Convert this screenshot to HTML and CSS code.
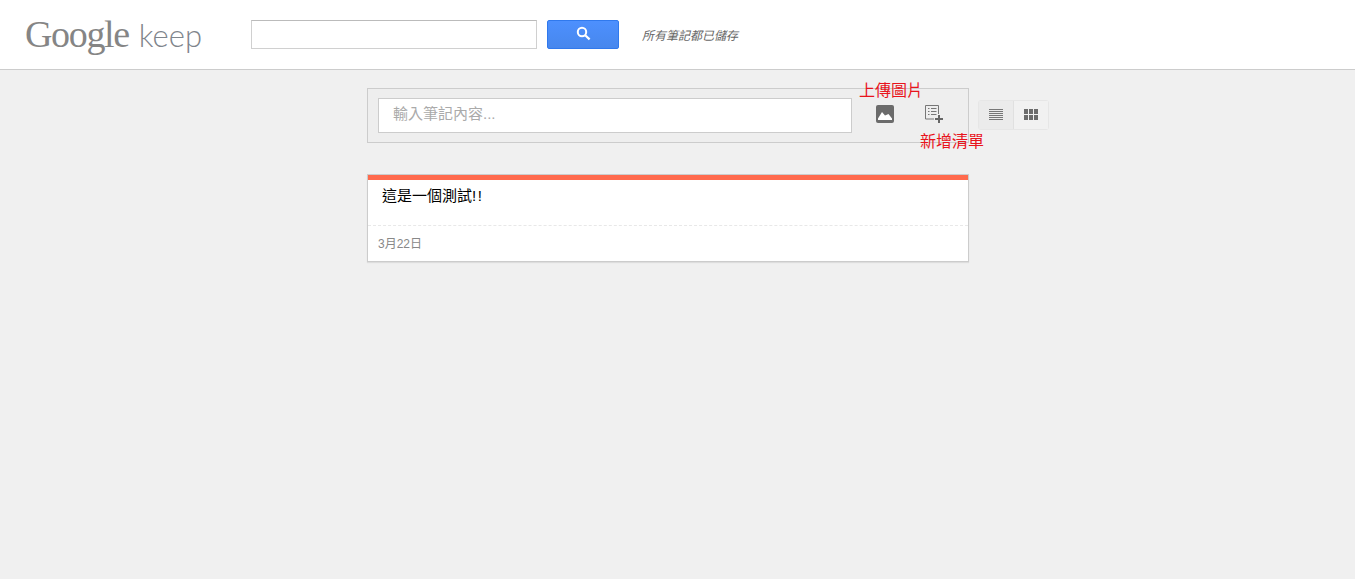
FILE: index.html
```html
<!DOCTYPE html>
<html lang="zh-Hant">
<head>
  <meta charset="UTF-8" />
  <title>Google Keep</title>
  <link rel="stylesheet" href="styles.css">
</head>
<body>
  <header class="topbar">
    <div class="logo"><span class="logo-google">Google</span><span class="logo-keep">keep</span></div>
    <input class="search-input" type="text" />
    <button class="search-btn" type="button" aria-label="search">
      <svg width="15" height="15" viewBox="0 0 15 15"><circle cx="6" cy="6" r="4.2" fill="none" stroke="#fff" stroke-width="2"/><path d="M9.2 9.2l4.4 4.2" stroke="#fff" stroke-width="2.2" fill="none"/></svg>
    </button>
    <span class="saved">所有筆記都已儲存</span>
  </header>

  <main class="main">
    <div class="column">
      <div class="composer">
        <div class="note-input">輸入筆記內容...</div>
        <button class="tool tool-image" type="button" aria-label="上傳圖片">
          <svg width="18" height="18" viewBox="0 0 18 18"><rect width="18" height="18" rx="2" fill="#6b6b6b"/><path d="M2 15v-1.500L6 7l3 3.500L12.500 9l3.500 4.500V15z" fill="#fff"/></svg>
        </button>
        <button class="tool tool-list" type="button" aria-label="新增清單">
          <svg width="19" height="19" viewBox="0 0 19 19">
            <path d="M13.500 9V.5H.5v13.500H9" fill="none" stroke="#777"/>
            <path d="M3 3.500h1.500M3 6.500h1.500M3 9.500h1.500M6 3.500h5.500M6 6.500h5.500M6 9.500h5.500" stroke="#777" fill="none"/>
            <path d="M14 10v8M10 14h8" stroke="#666" stroke-width="2" fill="none"/>
          </svg>
        </button>
        <span class="label label-image">上傳圖片</span>
        <span class="label label-list">新增清單</span>
      </div>

      <article class="note">
        <div class="note-bar"></div>
        <div class="note-body">這是一個測試<span class="bang">!!</span></div>
        <div class="note-foot">3月22日</div>
      </article>
    </div>

    <div class="view-toggle">
      <button class="view-btn active" type="button" aria-label="list">
        <svg width="14" height="11" viewBox="0 0 14 11"><path d="M0 .5h14M0 2.500h14M0 4.500h14M0 6.500h14M0 8.500h14M0 10.500h14" stroke="#777" fill="none"/></svg>
      </button>
      <button class="view-btn" type="button" aria-label="grid">
        <svg width="14" height="11" viewBox="0 0 14 11" fill="#6b6b6b"><rect width="4" height="5"/><rect x="5" width="4" height="5"/><rect x="10" width="4" height="5"/><rect y="6" width="4" height="5"/><rect x="5" y="6" width="4" height="5"/><rect x="10" y="6" width="4" height="5"/></svg>
      </button>
    </div>
  </main>
</body>
</html>
```

FILE: styles.css
```css
* { box-sizing: border-box; }

body {
  margin: 0;
  height: 100vh;
  overflow: hidden;
  background-color: #f0f0f0;
  font-family: "Liberation Sans", Arial, "Noto Sans CJK TC", sans-serif;
}

.topbar {
  display: flex;
  align-items: center;
  height: 70px;
  padding: 0 0 0 25px;
  background-color: #fff;
  border-bottom: 1px solid #ccc;
}

.logo {
  display: flex;
  align-items: baseline;
  width: 226px;
  color: #858585;
  margin-top: -2px;
}

.logo-google {
  font-family: "Liberation Serif", serif;
  font-size: 38px;
  letter-spacing: -1.35px;
}

.logo-keep {
  font-family: "Lato", sans-serif;
  font-weight: 300;
  font-size: 31px;
  margin-left: 10px;
  color: #7f858c;
}

.search-input {
  width: 286px;
  height: 29px;
  margin: 0;
  padding: 0 6px;
  background: #fff;
  border: 1px solid #d0d0d0;
  border-top-color: #bbb;
  border-radius: 0;
}

.search-btn {
  display: flex;
  align-items: center;
  justify-content: center;
  width: 72px;
  height: 29px;
  margin: 0 0 0 10px;
  padding: 0 0 3px;
  background: linear-gradient(#4d90fe, #4787ed);
  border: 1px solid #3079ed;
  border-radius: 2px;
}

.saved {
  margin-left: 23px;
  font-size: 12px;
  font-style: italic;
  color: #666;
}

.main {
  display: flex;
  align-items: flex-start;
  padding: 18px 0 0 367px;
}

.column { width: 602px; }

.composer {
  position: relative;
  display: flex;
  align-items: center;
  height: 55px;
  padding: 0 0 0 10px;
  background-color: #eee;
  border: 1px solid #ccc;
}

.note-input {
  width: 474px;
  height: 35px;
  padding: 0 14px;
  line-height: 30px;
  font-size: 15px;
  color: #aaa;
  background: #fff;
  border: 1px solid #ccc;
}

.tool {
  display: flex;
  padding: 0;
  background: none;
  border: none;
}

.tool-image { margin: -3px 0 0 24px; }
.tool-list { margin: -3px 0 0 31px; }

.label {
  position: absolute;
  font-size: 16px;
  line-height: 20px;
  white-space: nowrap;
  color: #e8141c;
}

.label-image { left: 491px; top: -8px; }
.label-list { left: 552px; top: 43px; }

.note {
  height: 88px;
  margin-top: 31px;
  background: #fff;
  border: 1px solid #ccc;
  box-shadow: 0 1px 1px rgba(0, 0, 0, 0.08);
}

.note-bar {
  height: 5px;
  background-color: #ff6a4d;
}

.note-body {
  height: 46px;
  padding: 6px 14px 0;
  font-size: 15px;
  line-height: 20px;
  color: #000;
  border-bottom: 1px dashed #e8e8e8;
}

.bang { letter-spacing: 1.5px; }

.note-foot {
  padding: 10px 10px 0;
  font-size: 12px;
  line-height: 16px;
  color: #888;
}

.view-toggle {
  display: flex;
  margin: 12px 0 0 9px;
  height: 30px;
  border: 1px solid #e6e6e6;
  border-radius: 3px;
}

.view-btn {
  display: flex;
  align-items: center;
  justify-content: center;
  width: 34px;
  padding: 0 0 2px;
  background: #f1f1f1;
  border: none;
}

.view-btn.active {
  width: 35px;
  background: #ebebeb;
  border-right: 1px solid #e0e0e0;
}
```
